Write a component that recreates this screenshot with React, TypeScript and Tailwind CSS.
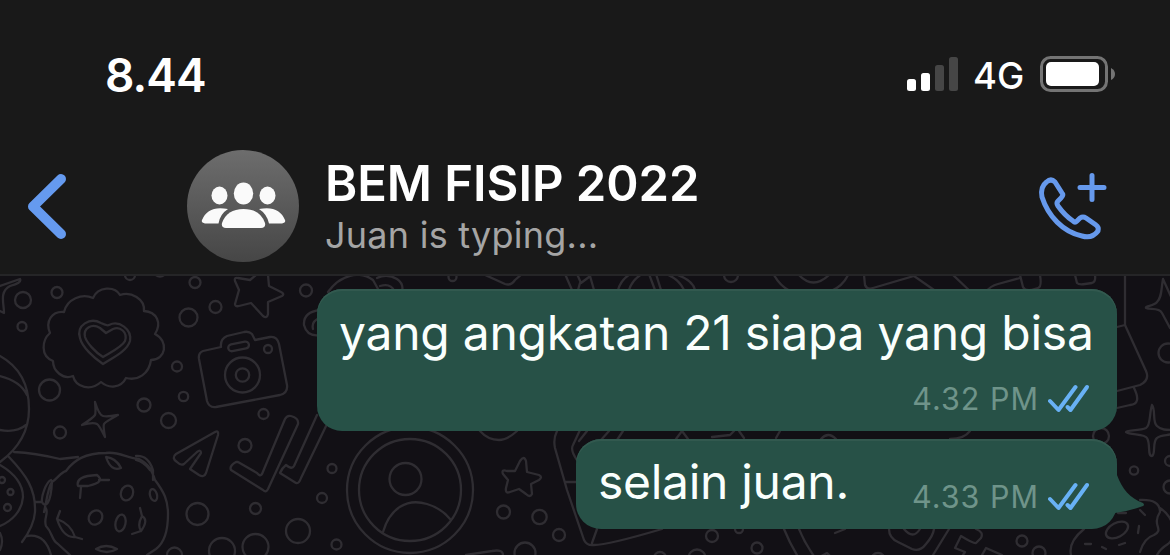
import { clsx } from 'clsx';

interface Message {
  id: number;
  text: string;
  time: string;
  last?: boolean;
}

const messages: Message[] = [
  { id: 1, text: 'yang angkatan 21 siapa yang bisa', time: '4.32 PM' },
  { id: 2, text: 'selain juan.', time: '4.33 PM', last: true },
];

// x, y, radius of the small bubbles scattered over the wallpaper
const dots: number[][] = [
  [23, 300, 8], [57, 292.5, 5.5], [22, 326.5, 4.5], [130, 275, 5], [160, 270, 6.5],
  [195, 282.5, 5.5], [188.5, 317.5, 9], [215.5, 307, 6], [306, 290.5, 6], [177, 366.5, 5],
  [49.5, 390, 10.5], [144, 405, 6.5], [183.5, 396.5, 4.7], [168.5, 420.5, 7.5], [60, 432.5, 6],
  [263.5, 414, 5], [245, 445.5, 6.5], [197.5, 514, 11], [255.5, 508.5, 5.5], [298, 531, 12],
  [222, 551, 13], [255.5, 547, 13], [174.5, 555, 7.5], [332, 468.5, 4.5], [322, 498, 5],
  [336.5, 544.5, 5], [503.5, 512, 6.5], [539.5, 517, 7.2], [559, 535, 6], [525, 553, 10.5],
  [452.5, 277, 4], [731, 275, 7], [660, 558, 6], [697, 558, 8.5], [712, 536, 6], [739, 529, 4],
  [757, 548, 5.5], [878, 560, 7], [1022, 541, 5.5], [1039, 553, 6.5], [1101, 436, 8], [1134, 470.5, 4.2],
  [1168, 353, 9.5], [1170, 461, 5], [1170, 487, 6.5], [2, 480, 3], [10.5, 492, 3], [7.5, 507.5, 3.5],
];

const Wallpaper = () => (
  <svg
    className="absolute inset-0 h-[279px] w-[1170px]"
    viewBox="0 276 1170 279"
    fill="none"
    stroke="#2f2d32"
    strokeWidth="2.300"
    strokeLinecap="round"
    strokeLinejoin="round"
  >
    {dots.map(([cx, cy, r]) => (
      <circle key={`${cx}-${cy}`} cx={cx} cy={cy} r={r} />
    ))}

    {/* Heart badge */}
    <path d="M64 312C67 299 82 293 93 298C98 286 115 286 120 295C131 291 145 299 144 311C157 312 162 323 155 334C169 341 166 360 151 360C149 374 138 381 126 378C121 388 109 389 101 382C91 391 76 388 73 376C63 380 53 371 53 361C40 356 42 340 50 333C45 321 52 311 64 312Z" />
    <path d="M103 364C94 358 82 347 80 338C76 325 90 317 101 323C105 325 107 326 109 325C119 320 132 329 130 341C127 351 114 357 103 364Z" />
    <path d="M103 357C95 352 87 343 85 337C83 328 92 323 100 328L106 333L113 329C120 326 128 332 125 341C122 347 111 352 103 357Z" />

    {/* Camera */}
    <path d="M221 347L203 351Q198 353 199 359L207 401Q209 408 216 407L280 395Q288 393 287 385L279 344Q277 336 270 337L255 340L252 334Q249 331 244 332L227 336Q220 339 221 347Z" />
    <rect x="228" y="343" width="21" height="7" rx="3.500" transform="rotate(-11 238 346)" />
    <circle cx="242.500" cy="375" r="17.500" />
    <circle cx="242.500" cy="375" r="6.700" />
    <circle cx="268" cy="349" r="4" />

    {/* Stars */}
    <path d="M239 290L235 304Q235 307 239 306L251 303L263 316Q267 319 268 314V302L282 296Q285 294 281 292L269 286L268 275M256 275L250 280L238 278Q234 277 235 281L239 290" />
    <path d="M520 461Q524 455 526 461L527 472L539 475Q543 477 539 480L531 484L532 494Q530 498 526 494L519 489L510 492Q505 494 506 488L508 480L503 474Q501 469 507 471L515 471Z" />
    <path d="M95 402Q99 415 103 416Q107 417 118 415Q105 422 104 424Q103 426 105 437Q99 425 97 424Q93 422 82 425Q93 418 95 415Q96 413 95 402Z" />
    <path d="M1152 405C1149 414 1151 425 1146 428C1140 431 1126 430 1126 432C1130 435 1145 434 1147 438C1151 445 1147 456 1152 456C1156 454 1152 442 1157 438C1161 434 1170 436 1174 433M1152 405C1156 410 1152 422 1157 426C1161 430 1166 430 1174 430" />
    <path d="M1163 279C1161 290 1162 297 1157 302C1154 306 1145 306 1146 308C1150 310 1159 307 1162 313L1170 328M1163 279L1172 299M0 286L20 279Q22 283 10 286C-1 292 4 303 4 313L0 311" />

    {/* Paper plane and check marks */}
    <path d="M176 454L215 432Q219 430 218 435L206 473Q204 478 199 475L190 469L201 453Q201 449 197 452L184 464Q181 466 177 462Q171 458 176 454Z" />
    <path d="M236 462Q229 466 231 470L263 490Q266 493 268 489L298 424Q299 418 291 416Q287 415 285 419L262 474Q260 477 257 473L238 462Z" />
    <path d="M317 415L294 466Q292 470 286 465Q282 468 280 473L296 483Q299 484 301 478L327 424" />

    {/* Cookie */}
    <path d="M44 512C47 499 48 487 52 482C57 479 61 472 66 471C74 460 85 453 106 453C119 451 128 459 139 459C149 464 152 471 155 480C164 492 168 500 168 514C168 532 164 543 156 549L147 555M51 480C46 482 41 497 42 502C45 508 51 505 52 481M45 507C50 512 43 518 46 526C53 533 51 540 58 544L70 555M136 456Q148 455 153 470V480" />
    <path d="M106 457Q116 458 121 468Q111 472 106 457ZM136 460Q144 462 150 470M78 486Q75 476 97 475Q106 482 88 486ZM81 487L80 498M99 480H109M57 519Q71 524 75 537Q63 538 57 519ZM57 519L60 511M75 537L82 539M96 549Q106 543 117 549Q107 555 96 549ZM142 516L140 508M142 516Q149 520 141 531Q137 525 142 516ZM141 531L132 534" />
    <ellipse cx="127" cy="493" rx="6" ry="7.500" transform="rotate(20 127 493)" />
    <ellipse cx="153.500" cy="495" rx="3.500" ry="6" transform="rotate(-15 153.500 495)" />
    <ellipse cx="95.500" cy="517.500" rx="6.500" ry="7.500" transform="rotate(35 95.500 517.500)" />
    <ellipse cx="120.500" cy="523" rx="5" ry="8.500" transform="rotate(12 120.500 523)" />

    {/* Planet on the left edge */}
    <path d="M0 356C20 367 29 386 29 409C29 431 19 448 0 462M0 376C12 379 22 384 27 395M0 430C10 432 20 430 26 425M14 452Q35 453 60 459L78 457M9 457C26 475 36 489 35 512Q34 526 22 542M0 465C17 475 23 486 23 497C22 511 12 521 0 526M35 502H42M27 536Q45 533 51 555M0 533Q4 541 0 550" />

    {/* Contact */}
    <circle cx="410" cy="490" r="63" />
    <circle cx="410" cy="490" r="51" />
    <circle cx="405.500" cy="479" r="16" />
    <path d="M383 532C390 508 407 498 427 504Q441 508 450 519M466 555L492 551Q503 549 503 555" />

    {/* Shapes showing between the header and the bubbles */}
    <path d="M328 292C340 275 360 270 373 280L378 289M377 278Q387 273 397 279Q404 284 402 291M380 286Q391 283 394 291M320 310Q303 312 304 325Q307 337 320 335M320 318Q311 321 313 329M483 274L505 284Q511 286 515 280L522 274M565 274L572 290M577 274L581 283L589 277M580 283L578 290M590 276L594 290M618 290Q621 279 632 273M629 290Q632 280 642 274M649 274L655 290M656 274L661 290M675 274Q693 280 695 290M666 274Q679 279 684 290" />
    <path d="M774 275Q780 286 790 291M848 275Q843 286 831 291M799 275Q813 290 829 275M864 275L865 285Q867 290 873 288L914 276L937 292M953 275L971 292M986 292Q990 286 998 284L1020 278M1020 275L1023 287Q1025 291 1031 290L1038 288Q1042 287 1040 275M1075 275L1077 283Q1079 285 1085 284L1092 283Q1096 282 1095 275" />
    <path d="M480 431Q488 440 499 440Q507 440 517 431M557 431Q553 439 555 448L567 490L584 540Q587 546 594 545Q608 545 662 529M566 482H577M580 430L573 445Q570 450 577 460M592 543L597 529M784 529Q790 544 800 560M799 529Q805 544 816 559L827 553L836 562M587 431L579 441M609 431L601 440M623 431L617 440M676 439L682 431L688 439M712 437L730 435L734 431M739 431L744 438M776 438L780 431M950 439Q964 439 970 431M821 439Q828 431 836 439M835 533L845 529" />

    {/* Right edge */}
    <path d="M1125 275V325L1146 371Q1150 380 1140 385L1117 391M1117 327L1125 325M1134 388Q1142 404 1130 405L1117 408" />
    <path d="M889 529Q889 538 898 542L912 549Q920 552 926 544Q933 536 934 529M904 529Q913 540 920 529M949 529L933 555M976 529Q984 532 981 538L976 543Q974 544 961 536L955 548L965 552L963 555M982 555L986 548L1002 555M1084 529Q1068 542 1071 555M1140 500Q1160 499 1160 512C1151 526 1165 529 1154 535Q1144 538 1140 552M1160 508C1175 518 1177 536 1168 544Q1160 549 1157 555" />
    <ellipse cx="1117" cy="530" rx="12" ry="7" transform="rotate(-28 1117 530)" />
    <path d="M1118 513H1126M1140 510L1145 515M1139 526L1138 533M1085 544H1091M1102 547L1106 549M1119 545L1125 543" />
  </svg>
);

const ReadReceipt = () => (
  <svg className="h-8 w-[42px]" viewBox="0 0 42 32" fill="none" stroke="#68b1f5" strokeWidth="4" strokeLinecap="round" strokeLinejoin="round">
    <path d="M2 18L10.500 27L27.500 4" />
    <path d="M19.500 24L22.500 27L39 4" />
  </svg>
);

const Bubble = ({ message }: { message: Message }) => (
  <div
    className={clsx(
      'relative flex justify-between rounded-[25px] bg-[#275147] pt-[14px] pr-[27px] pb-[16px] pl-[22px] shadow-[inset_0_2px_0_#32594f]',
      message.last ? 'h-[90px] w-[541px]' : 'h-[142px] w-[800px] flex-col',
    )}
  >
    {message.last && (
      <svg className="absolute top-[36px] left-[539px] h-[40px] w-[31px]" viewBox="0 0 31 40" fill="#275147">
        <path d="M0 0H2C7 14 15 23 28 28Q30 30 28 31Q15 36 0 38Z" />
      </svg>
    )}
    <p
      className={clsx(
        'text-[48px] leading-[60px] whitespace-nowrap text-[#fafffd]',
        message.last ? '-mt-px tracking-[-0.3px]' : 'tracking-[-0.25px]',
      )}
    >
      {message.text}
    </p>
    <div className="flex items-center gap-[9px] self-end">
      <span className="text-[30.5px] leading-8 tracking-[1px] text-[#6f948a]">{message.time}</span>
      <ReadReceipt />
    </div>
  </div>
);

const StatusBar = () => (
  <div className="flex h-[150px] justify-between pr-[54px] pl-[105px]">
    <span className="mt-[50px] text-[46px] leading-[50px] font-semibold tracking-[-0.9px] text-white">8.44</span>
    <div className="mt-[50px] flex h-[50px] items-center">
      <svg className="h-[36px] w-[52px]" viewBox="0 0 52 36" fill="white">
        <rect x="0" y="22" width="9" height="12" rx="2.500" />
        <rect x="14" y="16" width="9" height="18" rx="2.500" />
        <rect x="28" y="8" width="9" height="26" rx="2.500" fill="#464646" />
        <rect x="42" y="0" width="9" height="34" rx="2.500" fill="#464646" />
      </svg>
      <span className="ml-[14px] w-[67px] pt-px text-[36.5px] leading-[50px] font-medium text-white">4G</span>
      <svg className="h-[38px] w-[76px]" viewBox="0 0 76 38" fill="none">
        <rect x="1.500" y="1.500" width="65" height="33" rx="9" stroke="#747474" strokeWidth="3" />
        <rect x="6" y="6" width="53" height="24" rx="5" fill="white" />
        <path d="M71 12Q75 14 75 18Q75 22 71 24Z" fill="#747474" />
      </svg>
    </div>
  </div>
);

const ChatHeader = () => (
  <div className="flex h-[124px] items-start">
    <svg className="mt-[22px] ml-[26px] h-[70px] w-[42px]" viewBox="0 0 42 70" fill="none" stroke="#659aef" strokeWidth="10" strokeLinecap="round" strokeLinejoin="round">
      <path d="M35 7L7 34.500L35 62" />
    </svg>
    <svg className="ml-[119px] h-28 w-28" viewBox="0 0 112 112" fill="#fafafa">
      <defs>
        <linearGradient id="avatar" x1="0" y1="0" x2="0" y2="1">
          <stop stopColor="#6d6d6d" />
          <stop offset="1" stopColor="#464646" />
        </linearGradient>
      </defs>
      <circle cx="56" cy="56" r="56" fill="url(#avatar)" />
      <ellipse cx="32.500" cy="45.500" rx="8" ry="9" />
      <ellipse cx="80.500" cy="45.500" rx="8" ry="9" />
      <ellipse cx="56.500" cy="43.500" rx="9.700" ry="11" />
      <path d="M35 73Q40 59 56.500 59Q73 59 78 73Q79 78 74 78H39Q34 78 35 73Z" />
      <path d="M41 59Q33 64 31.500 73.500H18Q14 73 15 70Q21 55 41 59ZM72 59Q80 64 82 73.500H95Q99 73 98 70Q92 55 72 59Z" />
    </svg>
    <div className="ml-[26px] flex-1">
      <h1 className="mt-[4px] text-[49px] leading-[60px] font-semibold tracking-[-0.05px] whitespace-nowrap text-white">BEM FISIP 2022</h1>
      <p className="mt-[-4px] text-[36px] leading-[50px] tracking-[0.25px] text-[#a5a5a5]">Juan is typing...</p>
    </div>
    <svg className="mt-[20px] mr-[61px] h-[72px] w-[72px]" viewBox="0 0 72 72" fill="none" stroke="#6699ec" strokeWidth="5" strokeLinecap="round" strokeLinejoin="round">
      <path d="M9.500 12Q14 8 18 12L25 23Q27 25 24 28L21 31Q19 33 21 36C26 43 30 47 36 51Q38 53 40 51L43 48Q46 46 49 48L59 55Q62 57 61 61Q55 69 45 66C26 62 11 46 5 27Q3 17 9.500 12Z" />
      <path d="M55 5.500V29.500M43 17.500H67" />
    </svg>
  </div>
);

const App = () => {
  return (
    <div className="flex h-[555px] w-[1170px] flex-col overflow-hidden bg-[#191919] font-['Inter',sans-serif]">
      <StatusBar />
      <ChatHeader />
      <main className="relative flex-1 overflow-hidden border-t-2 border-[#252527] bg-[#121015]">
        <Wallpaper />
        <div className="relative flex flex-col items-end gap-2 pt-[13px] pr-[53px]">
          {messages.map((message) => (
            <Bubble key={message.id} message={message} />
          ))}
        </div>
      </main>
    </div>
  );
};

export default App;
